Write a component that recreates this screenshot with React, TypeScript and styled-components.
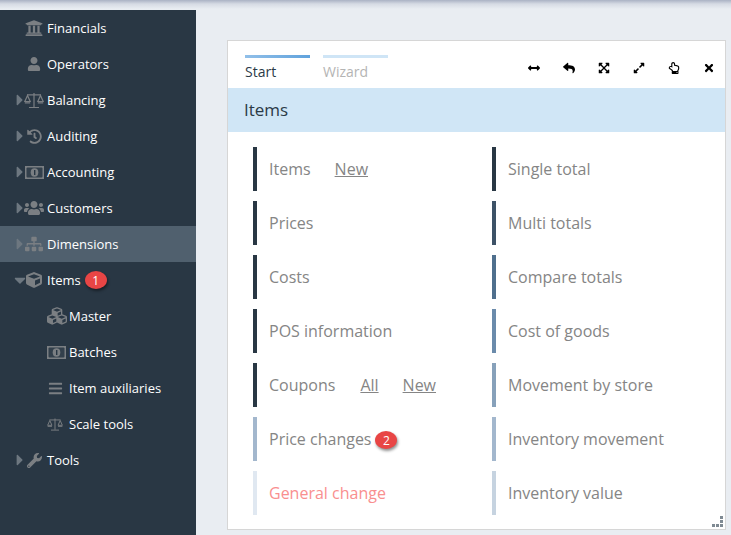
import React from 'react';
import styled, { createGlobalStyle } from 'styled-components';
import {
  FaUniversity, FaUser, FaHistory, FaUsers, FaSitemap, FaCube, FaCubes,
  FaBars, FaWrench, FaCaretRight, FaCaretDown, FaArrowsAltH, FaReply, FaExpandArrowsAlt,
  FaExpandAlt, FaRegHandPointUp, FaTimes,
} from 'react-icons/fa';

const GlobalStyle = createGlobalStyle`
  html, body { margin: 0; padding: 0; height: 535px; overflow: hidden; background: #e9edf2; }
  body { font-family: "Open Sans", "Liberation Sans", sans-serif; }
`;

const Page = styled.div`
  width: 731px;
  height: 535px;
  display: flex;
  flex-direction: column;
  overflow: hidden;
`;

const TopShade = styled.div`
  height: 10px;
  flex: none;
  background: linear-gradient(#aab2c4 0, #d6dbe4 4px, #e9edf2 9px);
`;

const Body = styled.div`
  flex: 1;
  display: flex;
`;

const Sidebar = styled.nav`
  width: 196px;
  flex: none;
  background: #293744;
`;

const NavRow = styled.div<{ $active?: boolean; $sub?: boolean }>`
  height: 36px;
  display: flex;
  align-items: center;
  padding-left: ${p => (p.$sub ? '47px' : '16px')};
  background: ${p => (p.$active ? '#50606e' : 'transparent')};
  color: #fff;
  font-size: 13px;
`;

const Caret = styled.span`
  width: 8px;
  flex: none;
  display: flex;
  justify-content: center;
  color: #6d7780;
  font-size: 18px;

  svg {
    flex: none;
  }
`;

const NavIcon = styled.span<{ $sub?: boolean }>`
  width: ${p => (p.$sub ? '22px' : '20px')};
  margin-right: ${p => (p.$sub ? '0' : '3px')};
  flex: none;
  display: flex;
  align-items: center;
  justify-content: ${p => (p.$sub ? 'flex-start' : 'center')};
  color: #7b7f83;
  font-size: 18px;
`;

const Badge = styled.span<{ $inline?: boolean }>`
  display: inline-flex;
  align-items: center;
  justify-content: center;
  width: 22px;
  height: 18px;
  margin-left: 4px;
  margin-top: ${p => (p.$inline ? '2px' : '0')};
  border-radius: 50%;
  background: #e84545;
  color: #fff;
  font-size: 12px;
  box-shadow: 1px 2px 3px rgba(0, 0, 0, 0.45);
`;

const Content = styled.main`
  flex: 1;
  padding: 30px 5px 5px 31px;
`;

const Card = styled.section`
  box-sizing: border-box;
  width: 499px;
  height: 490px;
  display: flex;
  flex-direction: column;
  background: #fff;
  border: 1px solid #d6d6d6;
  position: relative;
`;

const TabBar = styled.div`
  height: 47px;
  flex: none;
  display: flex;
  padding: 14px 0 0 17px;
  box-sizing: border-box;
`;

const Tab = styled.div<{ $active?: boolean }>`
  width: 65px;
  height: 33px;
  box-sizing: border-box;
  margin-right: 13px;
  padding-top: 4px;
  border-top: 3px solid transparent;
  border-image: ${p =>
    p.$active
      ? 'linear-gradient(90deg, #92c0e9, #5fa2dc) 1'
      : 'linear-gradient(90deg, #cfe5f6, #cfe5f6) 1'};
  border-bottom: 0;
  border-left: 0;
  border-right: 0;
  color: ${p => (p.$active ? '#2b3a47' : '#b4b4b4')};
  font-size: 14px;
  line-height: 19px;
`;

const Tools = styled.div`
  margin-left: auto;
  margin-right: -1px;
  display: flex;
  align-items: flex-start;
  padding-top: 5px;
`;

const ToolIcon = styled.span`
  width: 35px;
  height: 16px;
  display: flex;
  align-items: center;
  justify-content: center;
  color: #000;
  font-size: 12px;
`;

const Heading = styled.h2`
  margin: 0;
  height: 44px;
  box-sizing: border-box;
  flex: none;
  padding: 0 0 2px 16px;
  display: flex;
  align-items: center;
  background: #d0e6f6;
  color: #2b3a47;
  font-size: 17px;
  font-weight: 400;
`;

const Grid = styled.div`
  display: grid;
  grid-template-columns: 239px 1fr;
  grid-auto-rows: 44px;
  row-gap: 10px;
  padding: 15px 0 0 25px;
`;

const Entry = styled.div<{ $bar: string; $alert?: boolean }>`
  display: flex;
  align-items: center;
  border-left: 4px solid ${p => p.$bar};
  padding-left: 12px;
  color: ${p => (p.$alert ? '#f98f8f' : '#858585')};
  font-size: 16px;
`;

const EntryLink = styled.a<{ $gap: number }>`
  margin-left: ${p => p.$gap}px;
  color: #858585;
  text-decoration: underline;
`;

const Grip = styled.svg`
  position: absolute;
  right: 1px;
  bottom: 0;
`;

const ScaleIcon: React.FC<{ width?: number }> = ({ width = 20 }) => (
  <svg width={width} height="17" viewBox="0 0 20 17" fill="none" stroke="currentColor" strokeWidth="1.2">
    <path d="M10 1v14M5 15.5h10M3 2.8h14" />
    <path d="M3.5 3.5 0.8 9.5h5.4zM16.5 3.5l-2.7 6h5.4z" />
    <path d="M0.8 10.8h5.4M13.8 10.8h5.4" />
  </svg>
);

const BillIcon = () => (
  <svg width="19" height="13" viewBox="0 0 19 13">
    <rect width="19" height="13" fill="currentColor" />
    <rect x="1.5" y="1.5" width="16" height="10" rx="1" fill="#33404c" />
    <ellipse cx="9.5" cy="6.5" rx="3.8" ry="4.2" fill="currentColor" />
    <rect x="9" y="4" width="1.4" height="5" fill="#293744" />
  </svg>
);

const nav = [
  { label: 'Financials', icon: <FaUniversity /> },
  { label: 'Operators', icon: <FaUser style={{ fontSize: 14 }} /> },
  { label: 'Balancing', icon: <ScaleIcon />, caret: 'right' },
  { label: 'Auditing', icon: <FaHistory style={{ fontSize: 15 }} />, caret: 'right' },
  { label: 'Accounting', icon: <BillIcon />, caret: 'right' },
  { label: 'Customers', icon: <FaUsers style={{ fontSize: 20 }} />, caret: 'right' },
  { label: 'Dimensions', icon: <FaSitemap />, caret: 'right', active: true },
  { label: 'Items', icon: <FaCube style={{ fontSize: 16 }} />, caret: 'down', badge: 1 },
  { label: 'Master', icon: <FaCubes style={{ fontSize: 20 }} />, sub: true },
  { label: 'Batches', icon: <BillIcon />, sub: true },
  { label: 'Item auxiliaries', icon: <FaBars style={{ fontSize: 15, marginLeft: 1 }} />, sub: true },
  { label: 'Scale tools', icon: <ScaleIcon width={16} />, sub: true },
  { label: 'Tools', icon: <FaWrench style={{ fontSize: 15 }} />, caret: 'right' },
];

const tools = [
  <FaArrowsAltH />, <FaReply />, <FaExpandArrowsAlt />, <FaExpandAlt />, <FaRegHandPointUp />, <FaTimes />,
];

const grid: { label: string; bar: string; links?: [string, number][]; badge?: number; alert?: boolean }[] = [
  { label: 'Items', bar: '#293744', links: [['New', 24]] },
  { label: 'Single total', bar: '#293744' },
  { label: 'Prices', bar: '#293744' },
  { label: 'Multi totals', bar: '#3d5267' },
  { label: 'Costs', bar: '#293744' },
  { label: 'Compare totals', bar: '#4f6f8d' },
  { label: 'POS information', bar: '#293744' },
  { label: 'Cost of goods', bar: '#6b8bab' },
  { label: 'Coupons', bar: '#293744', links: [['All', 25], ['New', 24]] },
  { label: 'Movement by store', bar: '#87a1ba' },
  { label: 'Price changes', bar: '#a3b7cd', badge: 2 },
  { label: 'Inventory movement', bar: '#a3b7cd' },
  { label: 'General change', bar: '#e0e8f1', alert: true },
  { label: 'Inventory value', bar: '#c6d3e0' },
];

const App: React.FC = () => (
  <Page>
    <GlobalStyle />
    <TopShade />
    <Body>
      <Sidebar>
        {nav.map(item => (
          <NavRow key={item.label} $active={item.active} $sub={item.sub}>
            {!item.sub && (
              <Caret>
                {item.caret === 'right' && <FaCaretRight />}
                {item.caret === 'down' && <FaCaretDown />}
              </Caret>
            )}
            <NavIcon $sub={item.sub}>{item.icon}</NavIcon>
            {item.label}
            {item.badge && <Badge>{item.badge}</Badge>}
          </NavRow>
        ))}
      </Sidebar>
      <Content>
        <Card>
          <TabBar>
            <Tab $active>Start</Tab>
            <Tab>Wizard</Tab>
            <Tools>
              {tools.map((icon, i) => (
                <ToolIcon key={i}>{icon}</ToolIcon>
              ))}
            </Tools>
          </TabBar>
          <Heading>Items</Heading>
          <Grid>
            {grid.map(entry => (
              <Entry key={entry.label} $bar={entry.bar} $alert={entry.alert}>
                {entry.label}
                {entry.links?.map(([text, gap]) => (
                  <EntryLink key={text} $gap={gap}>{text}</EntryLink>
                ))}
                {entry.badge && <Badge $inline>{entry.badge}</Badge>}
              </Entry>
            ))}
          </Grid>
          <Grip width="14" height="14" viewBox="0 0 14 14" fill="#7f8a93">
            <rect x="10" y="1" width="3" height="3" />
            <rect x="10" y="5" width="3" height="3" />
            <rect x="10" y="9" width="3" height="3" />
            <rect x="6" y="9" width="3" height="3" />
            <rect x="2" y="9" width="3" height="3" />
          </Grip>
        </Card>
      </Content>
    </Body>
  </Page>
);

export default App;
